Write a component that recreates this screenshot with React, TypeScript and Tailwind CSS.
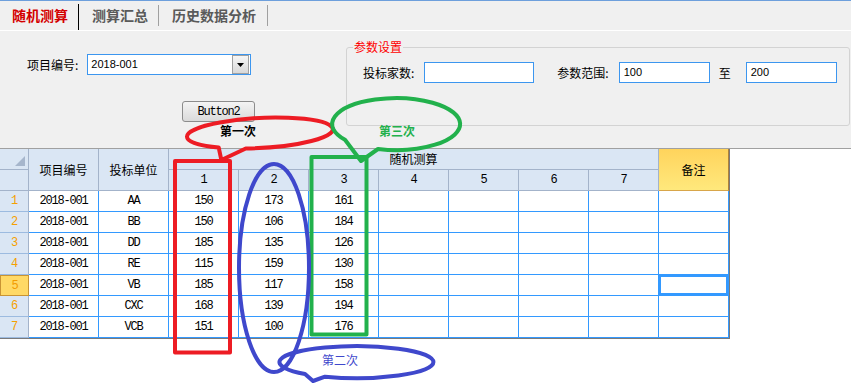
import React from "react";

// grid data: 项目编号, 投标单位, then the three random columns
const rows = [
  ["2018-001", "AA", "150", "173", "161"],
  ["2018-001", "BB", "150", "106", "184"],
  ["2018-001", "DD", "185", "135", "126"],
  ["2018-001", "RE", "115", "159", "130"],
  ["2018-001", "VB", "185", "117", "158"],
  ["2018-001", "CXC", "168", "139", "194"],
  ["2018-001", "VCB", "151", "100", "176"],
];

const mono = "font-['Liberation_Mono',monospace] text-[12px] tracking-[-1.2px]";
const head = "flex items-center justify-center border-r border-b border-[#a3b3ca] bg-[#dae6f4]";
const cell = `flex items-center justify-center border-r border-b border-[#3399ff] bg-white ${mono}`;

const TabBar = () => (
  <div className="flex h-[29px] bg-[#f0f0f0] text-[14px] font-bold">
    <div className="flex items-center pl-[12px] pr-[10px] text-[#d40000]">随机测算</div>
    <div className="mt-[3px] w-px bg-black" />
    <div className="flex items-center pl-[13px] pr-[10px] text-[#5a5a5a]">测算汇总</div>
    <div className="my-[4px] w-px bg-[#a0a0a0]" />
    <div className="flex items-center pl-[13px] pr-[11px] text-[#5a5a5a]">历史数据分析</div>
    <div className="my-[4px] w-px bg-[#a0a0a0]" />
  </div>
);

const Input = ({ value, w }: { value?: string; w: string }) => (
  <div className={`flex h-[21px] ${w} items-center border border-[#3c96ef] bg-white pl-[4px] font-['Liberation_Sans',sans-serif] text-[11px]`}>
    {value}
  </div>
);

const Panel = () => (
  <div className="flex h-[117px] bg-[#f0f0f0]">
    <div className="flex w-[346px] shrink-0 flex-col pl-[27px] pt-[23px]">
      <div className="flex h-[21px] items-center">
        <span>项目编号:</span>
        <div className="ml-[9px] flex h-[21px] w-[164px] items-center justify-between border border-[#3c96ef] bg-white pl-[3px] pr-px">
          <span className="font-['Liberation_Sans',sans-serif] text-[11px]">2018-001</span>
          <div className="flex h-[19px] w-[17px] items-center justify-center border border-[#a0a0a0] bg-linear-to-b from-[#f6f6f6] to-[#d9d9d9]">
            <svg width="7" height="4" viewBox="0 0 7 4">
              <path d="M0 0h7L3.5 4z" fill="#000" />
            </svg>
          </div>
        </div>
      </div>
      <div className={`ml-[155px] mt-[26px] flex h-[21px] w-[73px] items-center justify-center rounded-[3px] border border-[#8c8c8c] bg-linear-to-b from-[#f4f4f4] to-[#dadada] ${mono}`}>
        Button2
      </div>
    </div>
    <fieldset className="mr-px mt-[8px] h-[87px] flex-1 rounded-[3px] border border-[#d3d3d3]">
      <legend className="ml-[6px] px-px text-[12px] leading-[16px] text-[#ff0000]">参数设置</legend>
      <div className="flex items-center pl-[16px] pt-[7px]">
        <span>投标家数:</span>
        <div className="ml-[10px]">
          <Input w="w-[110px]" />
        </div>
        <span className="ml-[23px]">参数范围:</span>
        <div className="ml-[10px]">
          <Input w="w-[91px]" value="100" />
        </div>
        <span className="ml-[9px]">至</span>
        <div className="ml-[15px]">
          <Input w="w-[91px]" value="200" />
        </div>
      </div>
    </fieldset>
  </div>
);

const Grid = () => (
  <div className="flex-1 border-t border-[#a0a0a0] bg-white">
    <div className="grid w-[730px] auto-rows-[21px] grid-cols-[29px_repeat(10,70px)] border-r border-b border-[#7a7a7a]">
      <div className={`${head} relative`}>
        <svg className="absolute bottom-[3px] right-[3px]" width="10" height="10" viewBox="0 0 10 10">
          <path d="M10 0v10H0z" fill="#a6b6cc" />
        </svg>
      </div>
      <div className={`${head} row-span-2`}>项目编号</div>
      <div className={`${head} row-span-2`}>投标单位</div>
      <div className={`${head} col-span-7`}>随机测算</div>
      <div className="row-span-2 flex items-center justify-center border-r border-b border-r-[#b0823a] border-b-[#d8a64a] bg-linear-to-b from-[#ffd45c] to-[#ffe87c]">
        备注
      </div>
      <div className={head} />
      {["1", "2", "3", "4", "5", "6", "7"].map((n) => (
        <div key={n} className={`${head} ${mono}`}>
          {n}
        </div>
      ))}
      {rows.map((r, i) => (
        <React.Fragment key={i}>
          <div
            className={
              i === 4
                ? `flex items-center justify-center border border-[#c99434] bg-[#ffd966] text-[#f29b00] ${mono}`
                : `flex items-center justify-center border-r border-b border-r-[#a3b3ca] border-b-[#9cbbe0] bg-[#dae6f4] text-[#f5a000] ${mono}`
            }
          >
            {i + 1}
          </div>
          {r.map((v, j) => (
            <div key={j} className={cell}>
              {v}
            </div>
          ))}
          {[0, 1, 2, 3].map((k) => (
            <div key={"e" + k} className={cell} />
          ))}
          <div className={i === 4 ? `${cell} shadow-[inset_0_0_0_2px_#3399ff]` : cell} />
        </React.Fragment>
      ))}
    </div>
  </div>
);

// hand drawn markings laid over the screenshot
const Annotations = () => (
  <div className="pointer-events-none absolute inset-0">
    <svg className="absolute inset-0" width="851" height="392" viewBox="0 0 851 392" fill="none" strokeWidth="4" strokeLinejoin="round">
      <g stroke="#ed1c24">
        <path d="M218 145.3A73 15 0 1 1 245 147.7L220 158Z" transform="rotate(-3 260 133)" />
        <rect x="175" y="161" width="55" height="191.5" />
      </g>
      <g stroke="#22b14c">
        <path d="M345 139.7A64 26 0 1 1 378 149L361 161Z" />
        <rect x="311.5" y="157" width="55" height="177.5" />
      </g>
      <g stroke="#3f48cc">
        <ellipse cx="274" cy="268" rx="35" ry="104" />
        <path d="M305 374A77 16 0 1 1 325 376.7L313 381Z" />
      </g>
    </svg>
    <span className="absolute left-[220px] top-[123px] text-[12px] font-bold leading-[16px]">第一次</span>
    <span className="absolute left-[379px] top-[123px] text-[12px] font-bold leading-[16px] text-[#22b14c]">第三次</span>
    <span className="absolute left-[322px] top-[352px] text-[12px] leading-[16px] text-[#3f48cc]">第二次</span>
  </div>
);

export default function App() {
  return (
    <div className="relative flex h-[392px] w-[851px] flex-col overflow-hidden bg-white font-['Noto_Sans_CJK_SC',sans-serif] text-[12px] text-black">
      <div className="h-px bg-[#6d9fdc]" />
      <TabBar />
      <div className="h-px bg-white" />
      <Panel />
      <Grid />
      <Annotations />
    </div>
  );
}
